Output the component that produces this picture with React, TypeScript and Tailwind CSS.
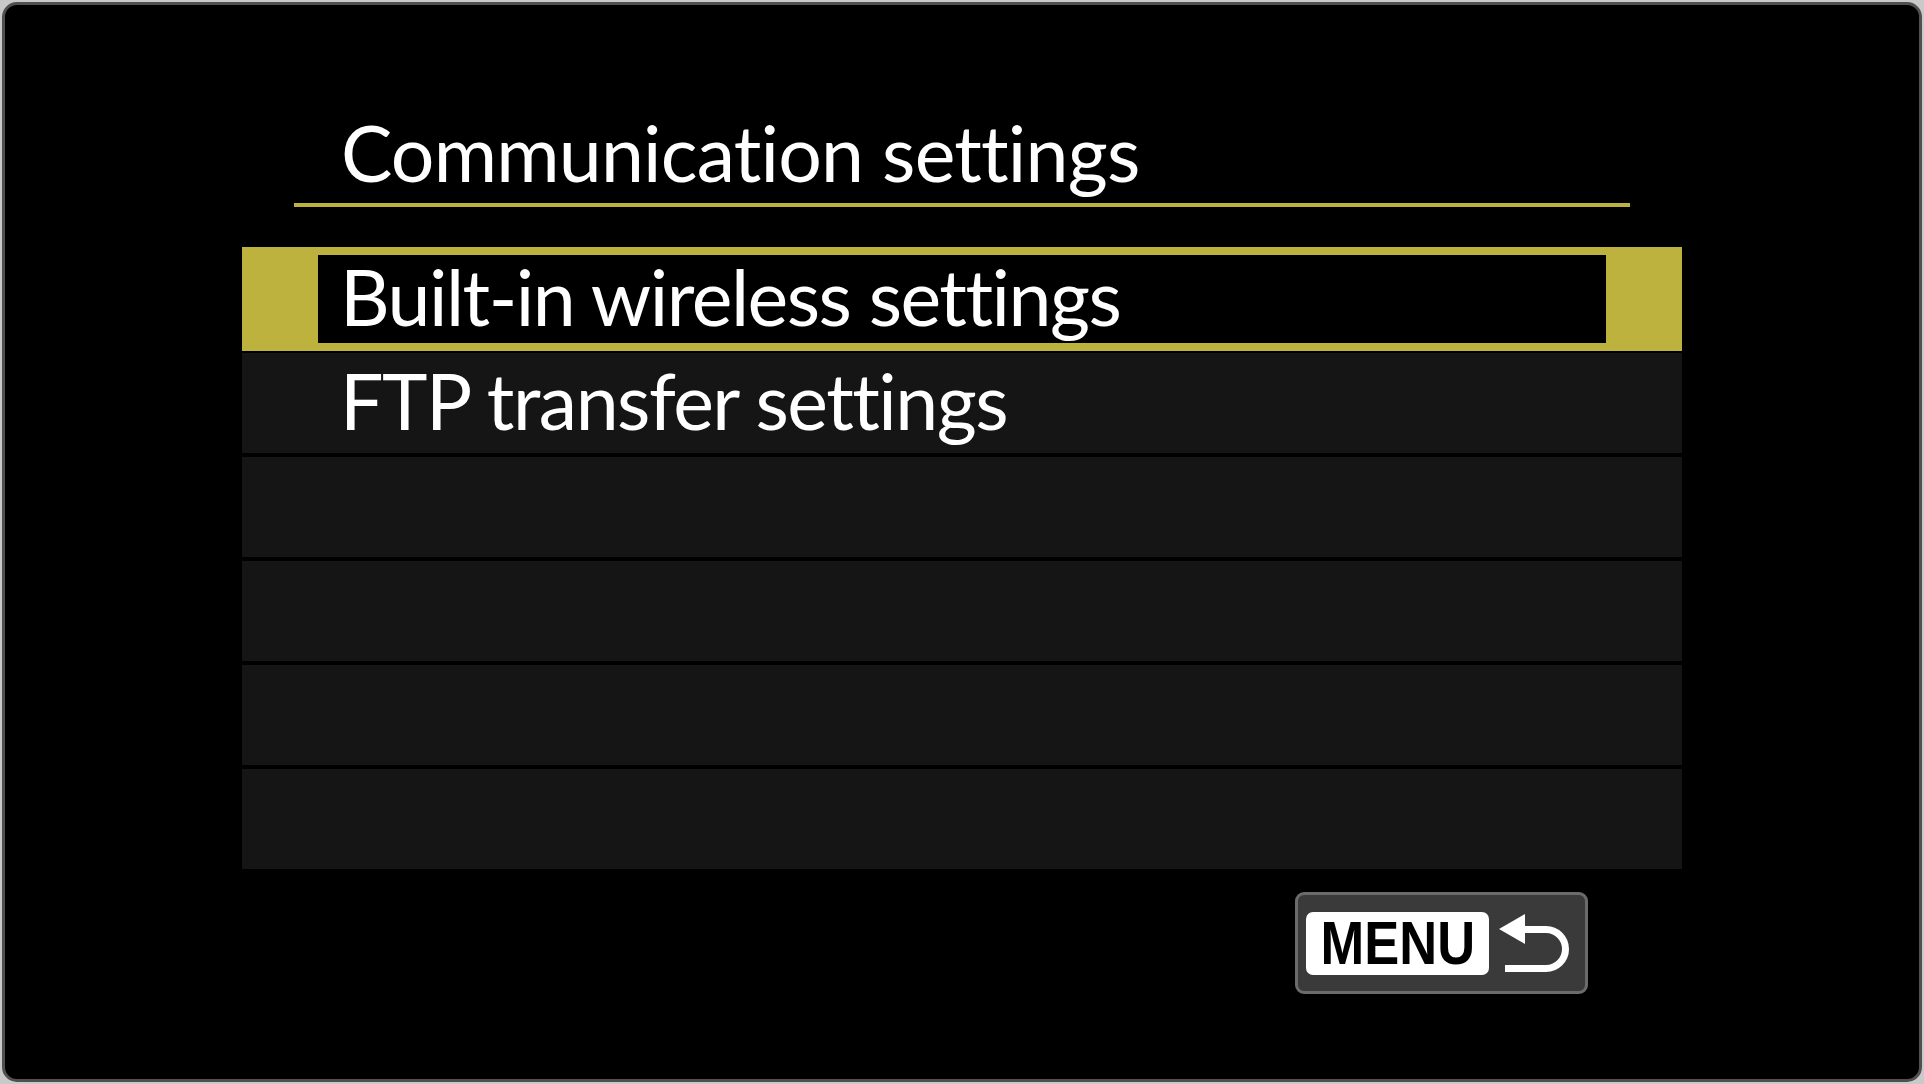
import React from 'react';

const rows = ['Built-in wireless settings', 'FTP transfer settings', '', '', '', ''];

function ReturnArrow() {
  return (
    <svg width="80" height="66" viewBox="0 0 80 66" className="shrink-0">
      <polygon points="4,20 30,5 30,35" fill="#fff" />
      <path d="M28 20.5 H51 A19.5 19.5 0 0 1 51 59.5 H10" fill="none" stroke="#fff" strokeWidth="7" />
    </svg>
  );
}

export default function App() {
  return (
    <div className="h-screen w-screen bg-[#c9c9c9] p-[2px]">
      <div
        className="h-full w-full overflow-hidden rounded-[15px] border-[3px] border-[#505050] bg-black pt-[109px] text-white [font-variant-ligatures:none]"
        style={{ fontFamily: 'Lato, "Open Sans", sans-serif' }}
      >
        <div className="ml-[289px] w-[1336px] border-b-[4px] border-[#bdb23e] pb-[12px] pl-[47px]">
          <h1 className="text-[77px] font-normal leading-[77px] tracking-[-0.8px]">Communication settings</h1>
        </div>

        <div className="ml-[237px] mt-[40px] flex w-[1440px] flex-col">
          {rows.map((label, i) =>
            i === 0 ? (
              <div key={i} className="mb-[2px] h-[104px] bg-[#bdb23e] px-[76px] py-[8px]">
                <div className="h-full bg-black pl-[22px] pt-[3px]">
                  <span className="block text-[77px] leading-[77px] tracking-[-1.5px]">{label}</span>
                </div>
              </div>
            ) : (
              <div key={i} className="mb-[4px] h-[100px] bg-[#151515] pl-[98px] pt-[9px]">
                <span className="block text-[77px] leading-[77px] tracking-[-1.5px]">{label}</span>
              </div>
            )
          )}
        </div>

        <div className="ml-[1290px] mt-[19px] flex h-[102px] w-[293px] items-center rounded-[9px] border-[3px] border-[#6b6b6b] bg-[#3a3a3a] pl-[8px]">
          <div className="flex h-[63px] w-[183px] items-center justify-center rounded-[7px] bg-white">
            <span
              className="block scale-x-[0.86] text-[61px] font-bold leading-none text-black"
              style={{ fontFamily: '"Liberation Sans", Arial, sans-serif' }}
            >
              MENU
            </span>
          </div>
          <div className="ml-[6px] mt-[-2px]">
            <ReturnArrow />
          </div>
        </div>
      </div>
    </div>
  );
}
